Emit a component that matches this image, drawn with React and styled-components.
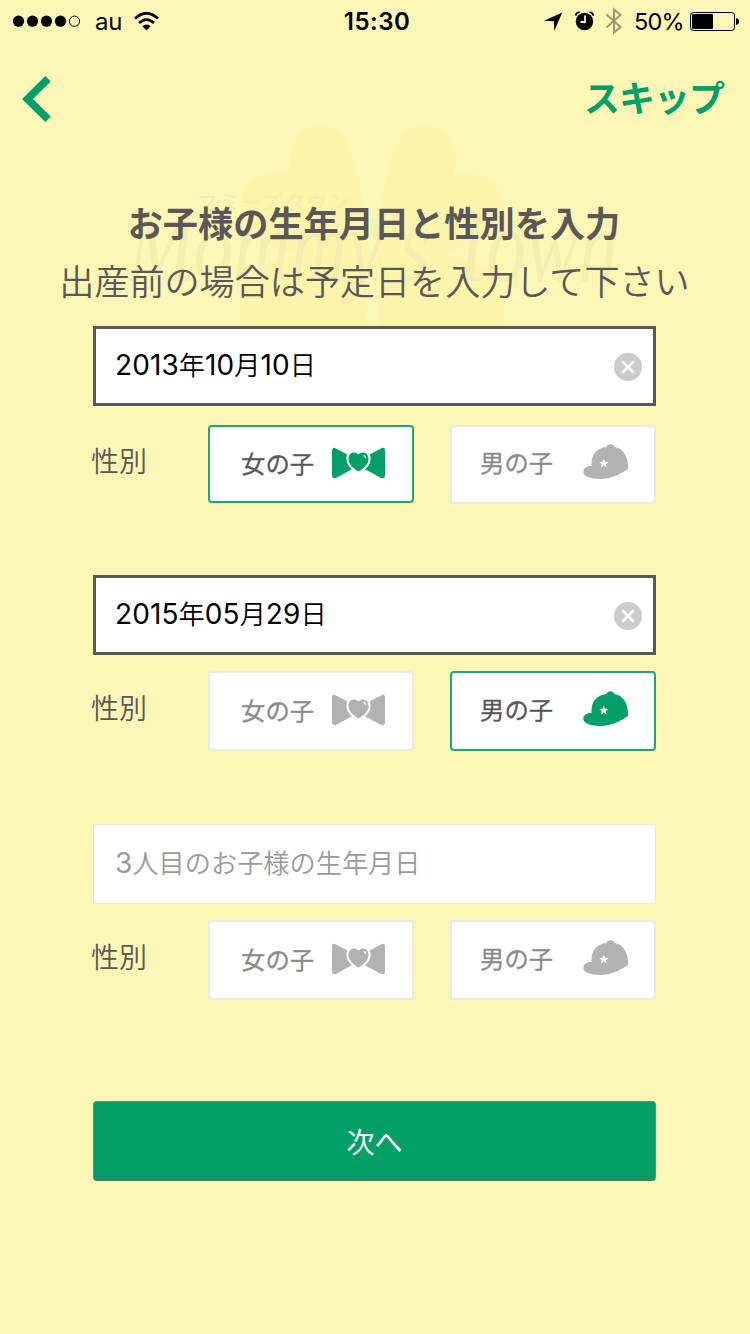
import { Fragment } from "react"
import styled, { createGlobalStyle } from "styled-components"

const GlobalStyle = createGlobalStyle`
    * {
        box-sizing: border-box;
    }
    body {
        margin: 0;
        background-color: #FCF6B6;
        font-family: "Inter", "Noto Sans CJK JP", sans-serif;
    }
`
const Screen = styled.div`
    width: 750px;
    height: 1334px;
    position: relative;
    isolation: isolate;
    overflow: hidden;
    background-color: #FCF6B6;
`
const Watermark = styled.svg`
    position: absolute;
    left: 110px;
    top: 110px;
    z-index: -1;
`
const StatusBar = styled.div`
    display: grid;
    grid-template-columns: 1fr auto 1fr;
    align-items: center;
    height: 40px;
    padding: 0 11px 0 12px;
    font-size: 24px;
    line-height: 40px;
    color: #000;
`
const StatusGroup = styled.div`
    display: flex;
    align-items: center;
    height: 40px;
    justify-content: ${props => props.$end ? "flex-end" : "flex-start"};
`
const Signal = styled.svg`
    margin-right: 14px;
`
const Carrier = styled.span`
    letter-spacing: -0.3px;
    margin-right: 12px;
    padding-top: 2px;
`
const Clock = styled.span`
    font-weight: 600;
    letter-spacing: 0.5px;
    padding: 2px 0 0 3px;
`
const Percent = styled.span`
    font-size: 23.5px;
    letter-spacing: -0.7px;
    margin: 0 6px 0 12px;
    padding-top: 2px;
`
const NavBar = styled.div`
    display: flex;
    justify-content: space-between;
    align-items: center;
    height: 118px;
    padding: 0 26px 0 22px;
`
const NavButton = styled.button`
    display: flex;
    padding: 0 0 ${props => props.$lift || 0}px;
    border: none;
    background: none;
    color: #02A068;
    font-family: "Noto Sans CJK JP", sans-serif;
    font-size: 36px;
    font-weight: 700;
    line-height: 48px;
    letter-spacing: -1px;
`
const Title = styled.h1`
    margin: 42px 0 0;
    padding-right: 2px;
    color: #595757;
    font-family: "Noto Sans CJK JP", sans-serif;
    font-size: 35.2px;
    font-weight: 700;
    line-height: 44px;
    text-align: center;
`
const Subtitle = styled.p`
    margin: 14px 0 0;
    padding-right: 1px;
    color: #595757;
    font-family: "Noto Sans CJK JP", sans-serif;
    font-size: 35.1px;
    font-weight: 350;
    line-height: 44px;
    text-align: center;
`
const Form = styled.div`
    width: 563px;
    margin: 24px 0 0 93px;
`
const Child = styled.div`
    height: 249px;
`
const Field = styled.div`
    display: flex;
    align-items: center;
    justify-content: space-between;
    height: 80px;
    padding: ${props => props.$filled ? "0 11px 1px 19px" : "0 12px 1px 21px"};
    border: ${props => props.$filled ? "3px solid #595757" : "1px solid #E4E4E4"};
    background-color: #FFF;
    color: ${props => props.$filled ? "#000" : "#9A9A9A"};
    font-size: 26.2px;
    font-weight: 350;
    line-height: 40px;
`
const Digits = styled.span`
    font-size: 28px;
    font-weight: 400;
    letter-spacing: 0.1px;
`
const Clear = styled.svg`
    position: relative;
    top: 1px;
`
const GenderRow = styled.div`
    display: grid;
    grid-template-columns: 115px 206px 206px;
    justify-content: start;
    margin-top: ${props => props.$gap}px;
    & > :last-child {
        margin-left: 36px;
    }
`
const Label = styled.span`
    color: #595757;
    font-size: 28px;
    font-weight: 350;
    line-height: 40px;
    padding-top: ${props => props.$top}px;
    margin-left: -2px;
`
const GenderButton = styled.button`
    display: flex;
    align-items: center;
    justify-content: space-between;
    width: 206px;
    height: ${props => props.$height}px;
    padding: ${props => props.$pad};
    border: ${props => props.$on ? "2px solid #1CA873" : "2px solid #E9E9E5"};
    border-radius: 4px;
    background-color: #FFF;
    color: ${props => props.$on ? "#595757" : "#8A8A8A"};
    font-family: "Noto Sans CJK JP", sans-serif;
    font-size: 24.4px;
    font-weight: 400;
    line-height: 36px;
    -webkit-text-stroke: 0.3px currentColor;
    svg {
        color: ${props => props.$on ? "#02A068" : "#B2B2B2"};
    }
`
const NextButton = styled.button`
    display: block;
    width: 563px;
    height: 80px;
    margin: 28px 0 0;
    padding: 3px 0 0;
    border: 1px solid #2BA876;
    border-bottom: 4px solid #3C8265;
    border-radius: 4px;
    background-color: #02A068;
    color: #FFF;
    font-family: "Noto Sans CJK JP", sans-serif;
    font-size: 28px;
    font-weight: 400;
`

const children = [
    { date: "2013年10月10日", gender: "girl", gap: 19 },
    { date: "2015年05月29日", gender: "boy", gap: 16 },
    { placeholder: "3人目のお子様の生年月日", gap: 16 },
]

function Bow () {
    return (
        <svg width="54" height="32" viewBox="0 0 54 32">
            <path d="M3 1 L24 12 V20 L4 31 Q0 32 0 28 V4 Q0 0 3 1Z" fill="currentColor" />
            <path d="M50 1 L29 12 V20 L49 31 Q53 32 53 28 V4 Q53 0 50 1Z" fill="currentColor" />
            <path d="M26.5 24.6 C21.5 21.5 16.5 17.5 16.5 12 C16.5 5 23.5 4 26.5 7.6 C29.5 4 36.5 5 36.5 12 C36.5 17.5 31.5 21.5 26.5 24.6Z" fill="currentColor" stroke="#FFF" strokeWidth="4.4" paintOrder="stroke" />
            <path d="M32 8.6 Q33.4 9.2 33.7 10.6" fill="none" stroke="#FFF" strokeWidth="1.2" strokeLinecap="round" />
        </svg>
    )
}

function Cap () {
    return (
        <svg width="46" height="36" viewBox="0 0 46 36">
            <path d="M8.5 22 C8 12 12 4.5 23.5 3 C24 -0.6 30.5 -0.8 31.5 3 C40 4.5 45.5 12 45 25 C39 29 30 34.8 17 35 C7 35 0.5 32 0.3 28 C0.2 24 4 22 8.5 22Z" fill="currentColor" />
            <path d="M20.8 14.8 L22 17.8 L25.3 18.1 L22.8 20.2 L23.6 23.4 L20.8 21.6 L18 23.4 L18.8 20.2 L16.3 18.1 L19.6 17.8Z" fill="#FFF" />
        </svg>
    )
}

function ClearIcon () {
    return (
        <Clear width="28" height="28" viewBox="0 0 28 28">
            <circle cx="14" cy="14" r="14" fill="#CACACA" />
            <path d="M9 9 L19 19 M19 9 L9 19" stroke="#FFF" strokeWidth="2.8" strokeLinecap="round" />
        </Clear>
    )
}

function FieldText ({text}) {
    return (
        <span>
            {text.split(/(\d+)/).map((part, i) => (
                /\d/.test(part) ? <Digits key={i}>{part}</Digits> : <Fragment key={i}>{part}</Fragment>
            ))}
        </span>
    )
}

function ChildForm ({date,placeholder,gender,gap}) {
    return (
        <Child>
            <Field $filled={!!date}>
                <FieldText text={date || placeholder} />
                {date && <ClearIcon />}
            </Field>
            <GenderRow $gap={gap}>
                <Label $top={gap === 19 ? 17 : 18}>性別</Label>
                <GenderButton $on={gender === "girl"} $height={gap === 19 ? 78 : 80} $pad="0 26px 3px 31px">
                    女の子
                    <Bow />
                </GenderButton>
                <GenderButton $on={gender === "boy"} $height={gap === 19 ? 79 : 80} $pad="0 25px 5px 28px">
                    男の子
                    <Cap />
                </GenderButton>
            </GenderRow>
        </Child>
    )
}

function Logo () {
    return (
        <Watermark width="540" height="230" viewBox="110 110 540 230">
            <g fill="#FCF4AA">
                <path d="M366 340 C369 240 366 125 323 125 C300 125 287 145 290 172 C260 168 240 183 240 206 C240 235 265 249 300 255 C262 261 240 276 240 300 V340Z" />
                <path d="M378 340 C376 240 378 125 424 125 C448 125 459 146 454 176 C484 168 504 185 504 210 C504 235 475 248 440 253 C478 260 504 275 504 300 V340Z" />
            </g>
            <circle cx="372" cy="228" r="10" fill="#EEF3B0" />
            <g fill="#F5EDAF">
                <text x="197" y="210" fontSize="20" fontWeight="500" fontFamily="Noto Sans CJK JP, sans-serif" textLength="152">マミーズタウン</text>
                <text x="128" y="281" fontSize="106" fontStyle="italic" fontFamily="Liberation Serif, serif" textLength="490" lengthAdjust="spacingAndGlyphs">Mommy's Town</text>
            </g>
        </Watermark>
    )
}

function App () {
    return (
        <Screen>
            <GlobalStyle />
            <Logo />
            <StatusBar>
                <StatusGroup>
                    <Signal width="69" height="12" viewBox="0 0 69 12">
                        <circle cx="6.5" cy="6.2" r="5.6" />
                        <circle cx="20.5" cy="6.2" r="5.6" />
                        <circle cx="34.5" cy="6.2" r="5.6" />
                        <circle cx="48.5" cy="6.2" r="5.6" />
                        <circle cx="62.5" cy="6.2" r="5.1" fill="none" stroke="#000" />
                    </Signal>
                    <Carrier>au</Carrier>
                    <svg width="25" height="19" viewBox="0 0 25 19">
                        <path d="M1 6.5 Q12.5 -4 24 6.5" fill="none" stroke="#000" strokeWidth="2.8" />
                        <path d="M5 11 Q12.5 4.2 20 11" fill="none" stroke="#000" strokeWidth="2.6" />
                        <path d="M8.3 14.3 Q12.5 10.6 16.7 14.3 L12.5 18.5Z" />
                    </svg>
                </StatusGroup>
                <Clock>15:30</Clock>
                <StatusGroup $end>
                    <svg width="82" height="28" viewBox="0 0 82 28">
                        <path d="M22.2 5.5 L4 13.7 L13.8 14.2 L14.3 24Z" />
                        <circle cx="44.5" cy="14.5" r="8.7" />
                        <path d="M35.6 8.6 Q36.2 5.6 39.6 5.2 M53.4 8.6 Q52.8 5.6 49.4 5.2" fill="none" stroke="#000" strokeWidth="1.8" />
                        <path d="M45 8.5 V15 H40.5" fill="none" stroke="#FCF6B6" strokeWidth="1.8" />
                        <path d="M66.5 7.5 L80.5 20 L74 25.5 V2.5 L80.5 8 L66.5 20.5" fill="none" stroke="#9A966F" strokeWidth="2" />
                    </svg>
                    <Percent>50%</Percent>
                    <svg width="49" height="20" viewBox="0 0 49 20">
                        <rect x=".5" y="1.5" width="44" height="18" rx="3" fill="none" stroke="#000" />
                        <rect x="2" y="3" width="21" height="15" rx="1" />
                        <path d="M46 7 Q49 7.5 49 10.5 Q49 13.5 46 14Z" />
                    </svg>
                </StatusGroup>
            </StatusBar>
            <NavBar>
                <NavButton aria-label="戻る">
                    <svg width="29" height="46" viewBox="0 0 29 46">
                        <path d="M26 2.7 L5.5 23 L26 43.3" fill="none" stroke="#02A068" strokeWidth="7.6" />
                    </svg>
                </NavButton>
                <NavButton $lift={6}>スキップ</NavButton>
            </NavBar>
            <Title>お子様の生年月日と性別を入力</Title>
            <Subtitle>出産前の場合は予定日を入力して下さい</Subtitle>
            <Form>
                {children.map((child, i) => (
                    <ChildForm key={i} {...child} />
                ))}
                <NextButton>次へ</NextButton>
            </Form>
        </Screen>
    )
}

export default App
